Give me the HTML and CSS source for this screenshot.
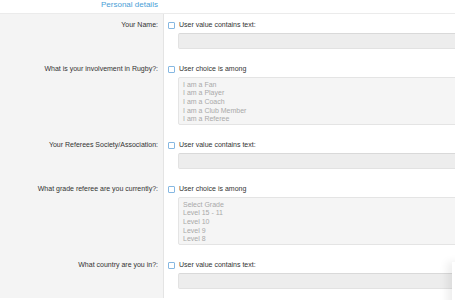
FILE: index.html
```html
<!DOCTYPE html>
<html>
<head>
<meta charset="utf-8">
<link rel="stylesheet" href="styles.css">
</head>
<body>
<div class="page">
  <div class="header"><span class="title">Personal details</span></div>
  <div class="form">
    <div class="label">Your Name:</div>
    <div class="field">
      <div class="check-line"><span class="checkbox"></span><span>User value contains text:</span></div>
      <div class="input"></div>
    </div>

    <div class="label">What is your involvement in Rugby?:</div>
    <div class="field">
      <div class="check-line"><span class="checkbox"></span><span>User choice is among</span></div>
      <div class="select">
        <div>I am a Fan</div>
        <div>I am a Player</div>
        <div>I am a Coach</div>
        <div>I am a Club Member</div>
        <div>I am a Referee</div>
        <div>I am a Referee Advisor/Assessor</div>
      </div>
    </div>

    <div class="label">Your Referees Society/Association:</div>
    <div class="field">
      <div class="check-line"><span class="checkbox"></span><span>User value contains text:</span></div>
      <div class="input"></div>
    </div>

    <div class="label">What grade referee are you currently?:</div>
    <div class="field">
      <div class="check-line"><span class="checkbox"></span><span>User choice is among</span></div>
      <div class="select">
        <div>Select Grade</div>
        <div>Level 15 - 11</div>
        <div>Level 10</div>
        <div>Level 9</div>
        <div>Level 8</div>
        <div>Level 7</div>
      </div>
    </div>

    <div class="label">What country are you in?:</div>
    <div class="field">
      <div class="check-line"><span class="checkbox"></span><span>User value contains text:</span></div>
      <div class="input"></div>
    </div>
  </div>
  <div class="float-panel"></div>
</div>
</body>
</html>
```

FILE: styles.css
```css
html, body {
  margin: 0;
  padding: 0;
  background: #ffffff;
  overflow: hidden;
}
.page {
  position: relative;
  width: 455px;
  height: 300px;
  overflow: hidden;
  font-family: "Liberation Sans", Arial, Helvetica, sans-serif;
  font-size: 7px;
  color: #333333;
}
.header {
  height: 13px;
  border-bottom: 1px solid #ebebeb;
  padding-left: 101px;
  box-sizing: content-box;
}
.title {
  font-size: 8px;
  line-height: 9px;
  color: #4a9ed6;
  display: block;
}
.form {
  display: grid;
  grid-template-columns: 164px 1fr;
}
.label {
  background: #f4f4f4;
  border-right: 1px solid #e4e4e4;
  text-align: right;
  padding: 7px 5px 0 0;
  line-height: 8px;
  white-space: nowrap;
}
.field {
  padding: 7px 0 9px 4px;
  min-width: 0;
}
.check-line {
  display: flex;
  align-items: center;
  height: 8px;
  line-height: 8px;
  gap: 4px;
  white-space: nowrap;
}
.checkbox {
  width: 5px;
  height: 5px;
  border: 1px solid #86b8e2;
  border-radius: 1px;
  background: #fff;
  flex: none;
}
.input {
  margin: 4px 0 0 10px;
  width: 320px;
  height: 16px;
  box-sizing: border-box;
  background: #ededed;
  border: 1px solid #e2e2e2;
  border-top-color: #d9d9d9;
  border-radius: 2px;
}
.select {
  margin: 4px 0 0 10px;
  width: 320px;
  height: 48px;
  box-sizing: border-box;
  background: #f5f5f5;
  border: 1px solid #e4e4e4;
  border-radius: 2px;
  padding: 2.5px 0 0 4px;
  overflow: hidden;
  color: #a9a9a9;
  line-height: 8.7px;
  white-space: nowrap;
}
.float-panel {
  position: absolute;
  left: 452px;
  top: 262px;
  width: 20px;
  height: 60px;
  background: #ffffff;
  box-shadow: -5px 0 9px rgba(0, 0, 0, 0.07);
}
```
